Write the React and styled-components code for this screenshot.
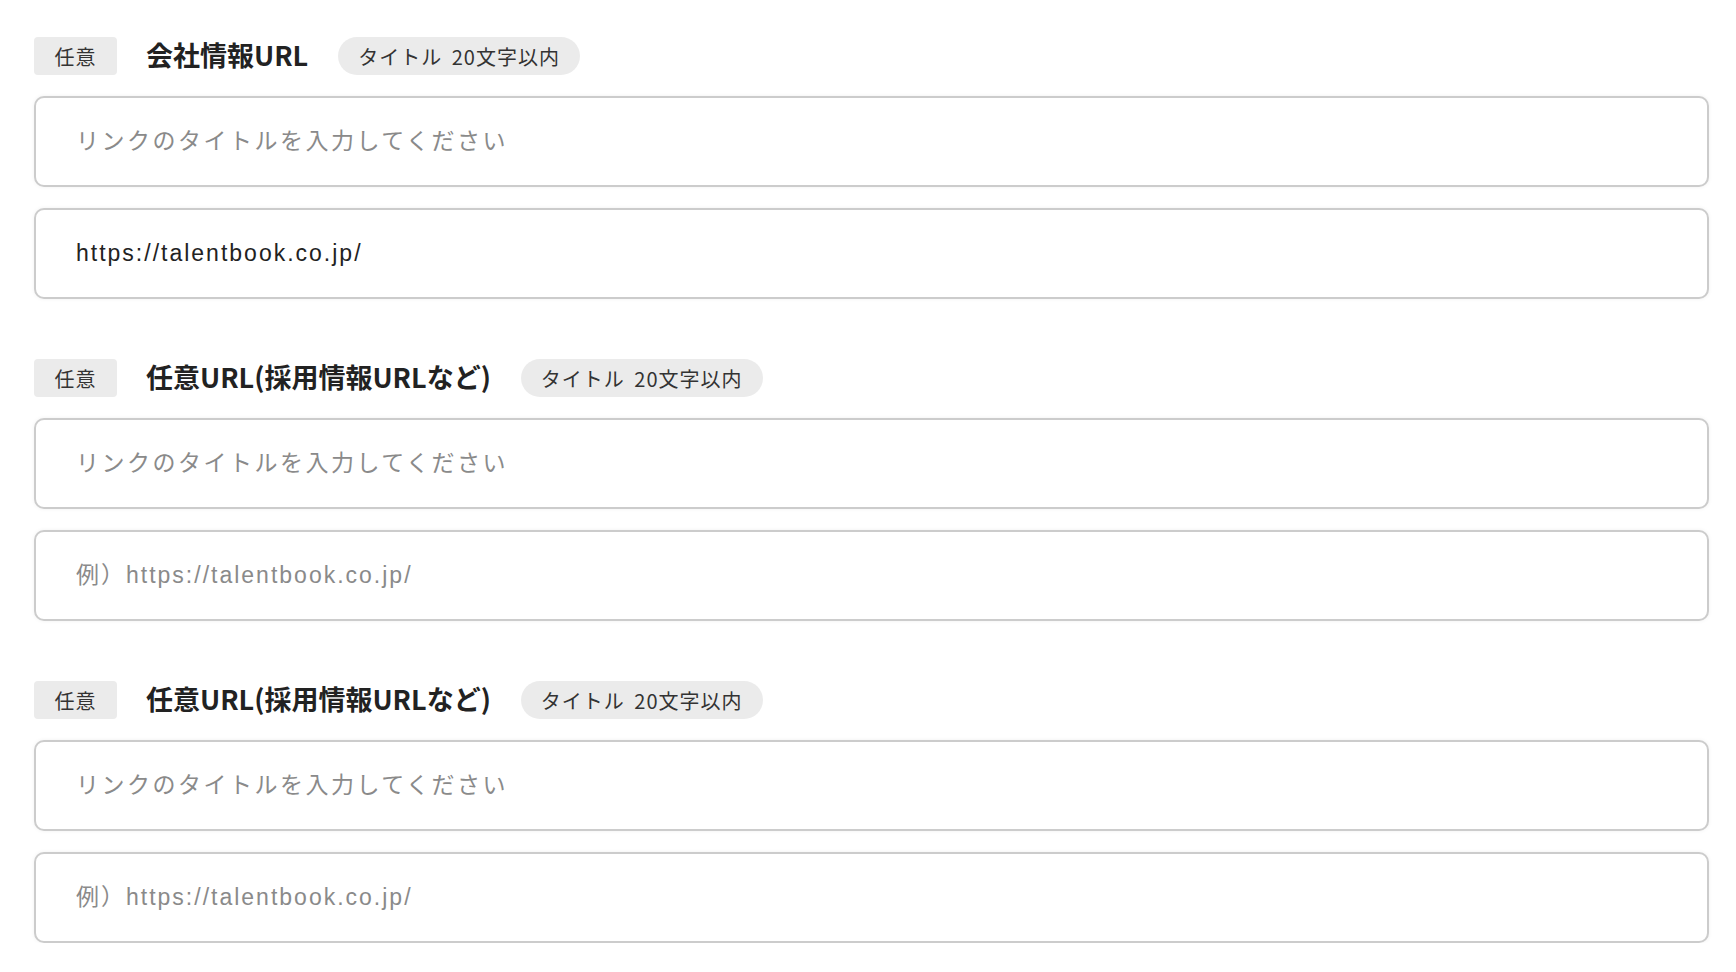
import React from 'react';
import styled, {createGlobalStyle} from 'styled-components';

const GlobalStyle = createGlobalStyle`
	body {
		margin: 0;
		background: #fff;
		font-family: 'Noto Sans CJK JP', sans-serif;
	}
`;

const Page = styled.div`
	display: flex;
	flex-direction: column;
	gap: 60px;
	padding: 37px 27px 0 34px;
`;

const Section = styled.section`
	display: flex;
	flex-direction: column;
	gap: 21px;
`;

const Header = styled.div`
	display: flex;
	align-items: center;
	height: 38px;
`;

const Badge = styled.span`
	display: flex;
	align-items: center;
	justify-content: center;
	width: 83px;
	height: 38px;
	box-sizing: border-box;
	background: #ebebeb;
	border-radius: 4px;
	color: #333;
	font-size: 20px;
	letter-spacing: 1px;
`;

const Title = styled.h2`
	margin: 0 30px 4px 29px;
	font-size: 27px;
	font-weight: 700;
	color: #222;
	line-height: 1;
`;

const Pill = styled.span`
	display: flex;
	align-items: center;
	height: 38px;
	padding: 0 20px;
	background: #ebebeb;
	border-radius: 19px;
	color: #333;
	font-size: 20px;
	letter-spacing: 1px;
	word-spacing: 4px;
`;

const Field = styled.input`
	display: block;
	width: 100%;
	height: 91px;
	box-sizing: border-box;
	padding: 0 40px;
	border: 2px solid #ccc;
	border-radius: 10px;
	box-shadow: 0 0 4px rgba(0, 0, 0, 0.06);
	background: #fff;
	color: #222;
	font-family: 'Liberation Sans', 'Noto Sans CJK JP', sans-serif;
	font-size: 23px;
	letter-spacing: 2px;
	outline: none;

	&::placeholder {
		color: #8a8a8a;
		letter-spacing: ${(p) => p.$spacing || '2px'};
	}
`;

const sections = [
	{title: '会社情報URL', url: 'https://talentbook.co.jp/'},
	{title: '任意URL(採用情報URLなど)', url: ''},
	{title: '任意URL(採用情報URLなど)', url: ''},
];

const App = () => {
	return (
		<>
			<GlobalStyle />
			<Page>
				{sections.map((s, i) => (
					<Section key={i}>
						<Header>
							<Badge>任意</Badge>
							<Title>{s.title}</Title>
							<Pill>タイトル 20文字以内</Pill>
						</Header>
						<Field
							placeholder='リンクのタイトルを入力してください'
							$spacing='2.5px'
						/>
						<Field
							placeholder='例）https://talentbook.co.jp/'
							defaultValue={s.url}
						/>
					</Section>
				))}
			</Page>
		</>
	);
};

export default App;
